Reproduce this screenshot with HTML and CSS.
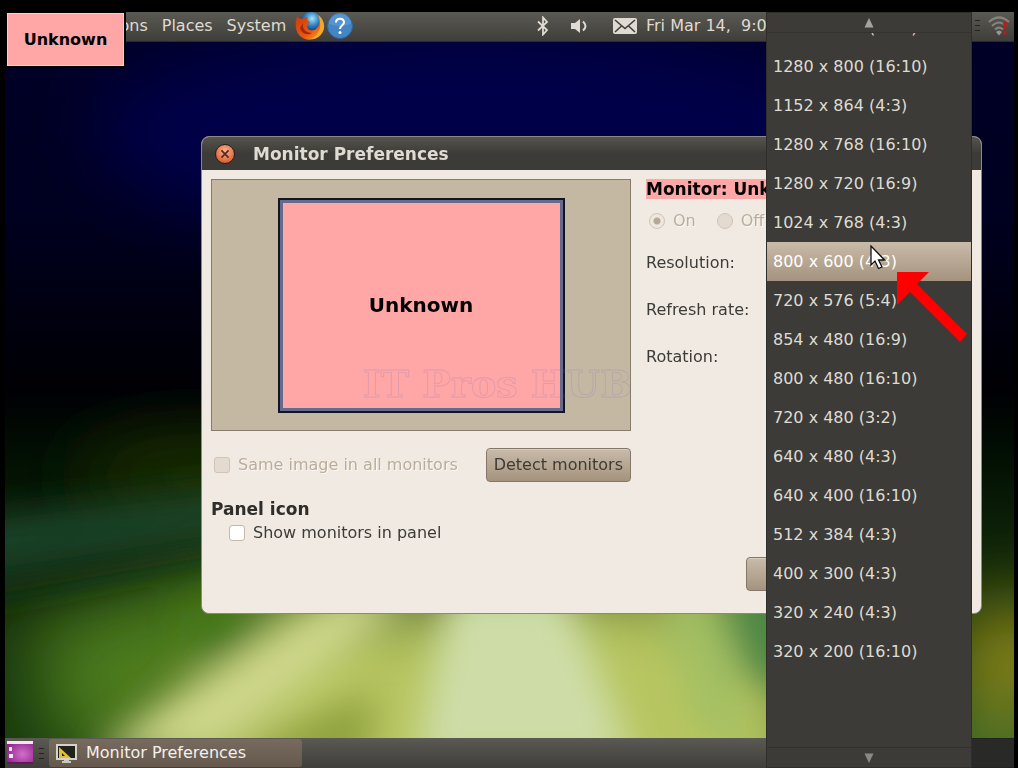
FILE: index.html
```
<!DOCTYPE html>
<html lang="en">
<head>
    <meta charset="UTF-8">
    <meta name="viewport" content="width=device-width, initial-scale=1.0">
    <title>Monitor Preferences</title>
    <link rel="stylesheet" href="styles.css">
</head>
<body>
<div class="screen">
    <!-- Top panel -->
    <header class="panel panel-top">
        <nav class="menus">
            <button type="button">Applications</button>
            <button type="button">Places</button>
            <button type="button">System</button>
        </nav>
        <svg class="launcher" viewBox="0 0 30 30" aria-hidden="true">
            <defs>
                <radialGradient id="globe" cx="55%" cy="30%" r="65%">
                    <stop offset="0" stop-color="#a5e4fa"/>
                    <stop offset=".5" stop-color="#2d82bf"/>
                    <stop offset="1" stop-color="#0b2468"/>
                </radialGradient>
                <linearGradient id="fox" x1="0" y1="0" x2="1" y2="1">
                    <stop offset="0" stop-color="#c93a0c"/>
                    <stop offset=".6" stop-color="#ea5a12"/>
                    <stop offset="1" stop-color="#f8b52a"/>
                </linearGradient>
            </defs>
            <circle cx="16" cy="12" r="11" fill="url(#globe)"/>
            <path d="M2 5 C3 7 5 8 7 8 C9 6 12 6 13 7 C11 9 13 10 15 11 C15 13 12 13 12 15 C12 19 17 21 21 18 C25 15 25 9 23 4 C29 8 31 16 27 22 C22 30 10 31 4 24 C0 19 0 11 2 5Z" fill="url(#fox)"/>
            <path d="M23 4 C29 8 31 16 27 22 C24 27 19 28 16 28 C22 25 26 19 25 12 C25 9 24 6 23 4Z" fill="#f3a82c"/>
            <path d="M8 12 C7 18 11 22 17 22 C12 25 6 22 5 17Z" fill="#a52a0a"/>
        </svg>
        <svg class="launcher" viewBox="0 0 30 30" aria-hidden="true">
            <circle cx="15" cy="15" r="12.5" fill="#4585c4" stroke="#2d66a4"/>
            <path d="M4 13 A11 11 0 0 1 26 13 Q15 17 4 13Z" fill="#6ba3d6" opacity=".5"/>
            <path d="M11 11.5 C11 6.5 19 6.5 19 11.5 C19 14 15 14.5 15 18" fill="none" stroke="#fff" stroke-width="2"/>
            <circle cx="15" cy="21.5" r="1.5" fill="#fff"/>
        </svg>
        <div class="tray">
            <svg class="bluetooth" viewBox="0 0 12 20" aria-label="Bluetooth">
                <path d="M1 5.5 L10 14 L6 18.5 V1.5 L10 6 L1 14.5" fill="none" stroke="#dfdbd2" stroke-width="1.8"/>
            </svg>
            <svg class="volume" viewBox="0 0 17 16" aria-label="Volume">
                <path d="M0 5 H4 L9 1 V15 L4 11 H0Z" fill="#dfdbd2"/>
                <path d="M12 3.5 Q17 8 12 12.5" fill="none" stroke="#dfdbd2" stroke-width="2"/>
            </svg>
            <svg class="mail" viewBox="0 0 24 16" aria-label="Mail">
                <rect x="0" y="0" width="24" height="16" rx="2" fill="#dfdbd2"/>
                <path d="M2 2 L12 10.5 L22 2 M2 14 L9 7.5 M22 14 L15 7.5" fill="none" stroke="#3c3b37" stroke-width="1.5"/>
            </svg>
            <time>Fri Mar 14, &nbsp;9:04 AM</time>
        </div>
        <i class="grip"></i>
        <svg class="wifi" viewBox="0 0 22 20" aria-label="Wireless">
            <g fill="none" stroke="#85827b" stroke-width="2.2">
                <path d="M1 6 Q11 -3 21 6"/>
                <path d="M4 10 Q11 3 18 10"/>
                <path d="M7 13.5 Q11 9.5 15 13.5"/>
            </g>
            <path d="M8 16 Q11 13 14 16 L11 19.5Z" fill="#9b978f"/>
            <path d="M15 6 H19 L18 14 H16Z M16 16 H18.5 V18.5 H16Z" fill="#b81d18"/>
        </svg>
    </header>

    <!-- Desktop with the preferences window -->
    <main class="desktop">
        <svg class="wallpaper" viewBox="0 0 1009 697" preserveAspectRatio="none" aria-hidden="true">
            <defs>
                <filter id="soft" x="-50%" y="-50%" width="200%" height="200%"><feGaussianBlur stdDeviation="36"/></filter>
                <filter id="fine" x="-50%" y="-50%" width="200%" height="200%"><feGaussianBlur stdDeviation="18"/></filter>
                <linearGradient id="sky" x1="0" y1="0" x2="0" y2="1">
                    <stop offset="0" stop-color="#000028"/>
                    <stop offset=".25" stop-color="#000020"/>
                    <stop offset=".5" stop-color="#000004"/>
                    <stop offset=".6" stop-color="#021003"/>
                    <stop offset=".8" stop-color="#16300c"/>
                    <stop offset="1" stop-color="#163a0e"/>
                </linearGradient>
            </defs>
            <rect width="1009" height="697" fill="url(#sky)"/>
            <g filter="url(#soft)">
                <ellipse cx="470" cy="90" rx="380" ry="110" fill="#00004a"/>
                <ellipse cx="200" cy="435" rx="130" ry="34" fill="#203400"/>
                <path d="M20 590 L230 520 L420 580 L150 700 L60 720Z" fill="#4c7a1c"/>
                <path d="M130 740 L290 570 L620 540 L780 570 L820 780 L130 800Z" fill="#b8c660"/>
                <ellipse cx="1010" cy="615" rx="70" ry="50" fill="#8a8514"/>
                <ellipse cx="990" cy="710" rx="60" ry="50" fill="#547a2c"/>
            </g>
            <g filter="url(#fine)">
                <path d="M-40 482 L230 450 L230 485 L-40 528Z" fill="#1c4a30" opacity=".9"/>
                <path d="M-40 540 L230 490 L230 508 L-40 562Z" fill="#092417" opacity=".8"/>
                <path d="M180 570 L290 565 L195 625Z" fill="#3f7414"/>
                <path d="M90 712 L330 555 L410 555 L210 712Z" fill="#cfd78c"/>
                <path d="M210 722 L370 650 L360 722Z" fill="#8c9e3c"/>
                <path d="M410 722 L445 550 L560 550 L630 722Z" fill="#cedda8"/>
                <path d="M650 550 L730 550 L740 720 L690 680Z" fill="#a3bf64"/>
                <path d="M705 550 L800 550 L800 650 L745 640Z" fill="#4d8745"/>
            </g>
        </svg>
        <section class="window">
            <div class="titlebar">
                <button type="button" class="close" aria-label="Close window">
                    <svg viewBox="0 0 20 20"><path d="M6 6 L14 14 M14 6 L6 14" stroke="#5a2a18" stroke-width="2"/></svg>
                </button>
                <h1>Monitor Preferences</h1>
            </div>
            <form class="content">
                <div class="left">
                    <div class="preview"><div class="monitor">Unknown</div></div>
                    <div class="row">
                        <label class="check off"><input type="checkbox" disabled>Same image in all monitors</label>
                        <button type="button" class="btn">Detect monitors</button>
                    </div>
                    <h2>Panel icon</h2>
                    <label class="check indent"><input type="checkbox">Show monitors in panel</label>
                </div>
                <div class="right">
                    <h2 class="name">Monitor: Unknown</h2>
                    <div class="radios">
                        <label class="check off"><input type="radio" name="power" checked disabled>On</label>
                        <label class="check off"><input type="radio" name="power" disabled>Off</label>
                    </div>
                    <div class="field">
                        <label for="resolution">Resolution:</label>
                        <select id="resolution"></select>
                    </div>
                    <div class="field">
                        <label for="refresh">Refresh rate:</label>
                        <select id="refresh"></select>
                    </div>
                    <div class="field">
                        <label for="rotation">Rotation:</label>
                        <select id="rotation"></select>
                    </div>
                    <div class="actions">
                        <button type="button" class="btn" aria-label="Apply"></button>
                        <button type="button" class="btn" aria-label="Close"></button>
                    </div>
                </div>
            </form>
        </section>
    </main>

    <!-- Bottom panel -->
    <footer class="panel panel-bottom">
        <svg class="show-desktop" viewBox="0 0 28 26" aria-label="Show desktop">
            <defs>
                <radialGradient id="purple" cx="60%" cy="55%" r="65%">
                    <stop offset="0" stop-color="#d070c8"/>
                    <stop offset="1" stop-color="#93248f"/>
                </radialGradient>
            </defs>
            <rect x="1" y="2" width="26" height="22" fill="url(#purple)"/>
            <path d="M1 1 H27 V4 H1Z M3 7 H6 V11 H3Z M3 14 H7 V18 H3Z" fill="#f0e8ee"/>
            <path d="M1 22 H27 V24 H1Z" fill="#641860"/>
        </svg>
        <i class="grip"></i>
        <button type="button" class="task">
            <svg viewBox="0 0 21 19" aria-hidden="true">
                <rect x="1" y="1" width="19" height="14" fill="#22221c" stroke="#d3d3c8" stroke-width="2"/>
                <path d="M3 3 L15 14 H3Z M6 9 V12 H9Z" fill="#e0c23a" fill-rule="evenodd"/>
                <path d="M8 16 H13 V17 H15 V19 H6 V17 H8Z" fill="#c8c8c0"/>
            </svg>
            Monitor Preferences
        </button>
        <div class="workspaces"></div>
    </footer>
</div>

<div class="monitor-tag">Unknown</div>
<div class="watermark">IT Pros HUB</div>

<!-- Open resolution list -->
<div class="popup">
    <button type="button" class="scroll up" aria-label="Scroll up">
        <svg viewBox="0 0 10 10"><path d="M5 0 L9.5 9.5 H0.5Z" fill="#a5a39c"/></svg>
    </button>
    <ul role="listbox" aria-label="Resolution">
        <li role="option">1360 x 768 (16:9)</li>
        <li role="option">1280 x 800 (16:10)</li>
        <li role="option">1152 x 864 (4:3)</li>
        <li role="option">1280 x 768 (16:10)</li>
        <li role="option">1280 x 720 (16:9)</li>
        <li role="option">1024 x 768 (4:3)</li>
        <li role="option" class="active" aria-selected="true">800 x 600 (4:3)</li>
        <li role="option">720 x 576 (5:4)</li>
        <li role="option">854 x 480 (16:9)</li>
        <li role="option">800 x 480 (16:10)</li>
        <li role="option">720 x 480 (3:2)</li>
        <li role="option">640 x 480 (4:3)</li>
        <li role="option">640 x 400 (16:10)</li>
        <li role="option">512 x 384 (4:3)</li>
        <li role="option">400 x 300 (4:3)</li>
        <li role="option">320 x 240 (4:3)</li>
        <li role="option">320 x 200 (16:10)</li>
    </ul>
    <button type="button" class="scroll down" aria-label="Scroll down">
        <svg viewBox="0 0 10 10"><path d="M5 10 L9.5 0.5 H0.5Z" fill="#8b8983"/></svg>
    </button>
</div>

<svg class="cursor" viewBox="0 0 16 25" aria-hidden="true">
    <path d="M1 1 V20 L5 16 L8.5 23.5 L12 22 L8.5 15 H14.5Z" fill="#fff" stroke="#111" stroke-width="1.3"/>
</svg>
<svg class="arrow" viewBox="0 0 70 70" aria-hidden="true">
    <path d="M0 0 H32 L20 12 L70 62 L63 70 L13 20 L0 33Z" fill="#fe0000"/>
</svg>
</body>
</html>
```
FILE: styles.css
```
/* -------- Base -------- */
:root {
    --dark: #3c3b37;
    --light: #dfdbd2;
    --base: #f1eae3;
    --pink: #ffa6a6;
    --brown: linear-gradient(#c9bbaa, #a4937d);
}
* { box-sizing: border-box; }
body {
    margin: 0;
    min-height: 100vh;
    background: #000;
    color: var(--dark);
    font: 16px/20px "DejaVu Sans", sans-serif;
    position: relative;
    overflow: hidden;
}
button, select { font: inherit; color: inherit; }
button { padding: 0; border: 0; background: none; }
h1, h2 { margin: 0; font-size: 17px; line-height: 20px; }
svg { display: block; flex: none; }
.screen {
    min-height: 100vh;
    padding: 12px 4px 0 5px;
    display: flex;
    flex-direction: column;
}

/* -------- Panels -------- */
.panel {
    display: flex;
    align-items: center;
    color: var(--light);
    background: linear-gradient(#5a5953, #3f3e3a);
    height: 30px;
}
.panel-top { padding-bottom: 2px; border-bottom: 1px solid #2b2a28; }
.menus { display: flex; gap: 14px; padding-left: 45px; }
.menus button { white-space: nowrap; }
.launcher { width: 30px; height: 30px; }
.menus + .launcher { margin-left: 9px; }
.tray { display: flex; align-items: center; margin-left: auto; width: 436px; white-space: nowrap; }
.bluetooth { width: 12px; height: 20px; }
.volume { width: 17px; height: 16px; margin-left: 22px; }
.mail { width: 24px; height: 16px; margin: 0 9px 0 25px; }
.grip {
    width: 5px;
    height: 11px;
    margin: 0 8px 0 2px;
    background: repeating-linear-gradient(#24231f 0 1px, transparent 1px 5px);
}
.wifi { width: 22px; height: 20px; margin-right: 4px; }
.show-desktop { width: 28px; height: 26px; margin: 0 3px 0 1px; }
.panel-bottom .grip { margin-right: 5px; }
.task {
    display: flex;
    align-items: center;
    gap: 9px;
    width: 253px;
    height: 28px;
    padding: 0 7px;
    color: #f4f0ea;
    background: linear-gradient(#776b5f, #65594e);
    border-radius: 3px;
}
.task svg { width: 21px; height: 19px; }
.workspaces {
    margin-left: auto;
    width: 42px;
    height: 30px;
    background: #292927;
    border: solid #222;
    border-width: 1px 0;
}

/* -------- Desktop -------- */
.desktop { flex: 1; position: relative; overflow: hidden; }
.wallpaper { position: absolute; inset: 0; width: 100%; height: 100%; }

/* -------- Window -------- */
.window {
    position: absolute;
    left: 196px;
    right: 32px;
    top: 94px;
    height: 478px;
    display: flex;
    flex-direction: column;
    background: var(--base);
    border: 1px solid #8a8983;
    border-radius: 8px;
    overflow: hidden;
}
.titlebar {
    display: flex;
    align-items: center;
    gap: 18px;
    height: 33px;
    flex: none;
    padding-left: 13px;
    color: var(--light);
    background: linear-gradient(#55544e, #3c3b37 50%);
}
.close {
    width: 20px;
    height: 20px;
    border: 1px solid #2a1e18;
    border-radius: 50%;
    background: radial-gradient(circle at 50% 35%, #f9b494, #dc6237 75%);
}
.content { flex: 1; display: flex; gap: 15px; padding: 9px 18px 9px 9px; }
.left { width: 420px; flex: none; }
.preview {
    display: grid;
    place-items: center;
    height: 252px;
    background: #c5b8a3;
    border: 1px solid #877b6c;
}
.monitor {
    display: grid;
    place-items: center;
    width: 287px;
    height: 215px;
    color: #000;
    background: var(--pink);
    border: 2px solid #111625;
    box-shadow: inset 0 0 0 3px #666b8d;
    font-size: 20px;
    font-weight: bold;
}
.row { display: flex; align-items: center; justify-content: space-between; margin: 17px 0; }
.row + h2 { color: #2e2d2a; }
.btn {
    height: 34px;
    padding: 0 7px;
    background: var(--brown);
    border: 1px solid #84776a;
    border-radius: 4px;
    box-shadow: inset 0 1px #d8cdbf;
}
.check { display: flex; align-items: center; gap: 8px; }
.off { color: #b9ad9b; text-shadow: 1px 1px #fbf7f2; }
.indent { margin: 4px 0 0 18px; }
.check input {
    appearance: none;
    width: 16px;
    height: 16px;
    margin: 0;
    margin-left: 3px;
    border: 1px solid #c4b9aa;
    border-radius: 3px;
    background: #fff;
}
.indent input { margin-left: 0; }
.check input:disabled { background: #e4dbd0; border-color: #cfc4b6; }
.check input[type="radio"] { border-radius: 50%; }
.check input[type="radio"]:checked { background: radial-gradient(circle, #b4a896 3px, #eee7df 4px); }
.right { flex: 1; display: flex; flex-direction: column; }
.name { color: #000; background: var(--pink); }
.radios { display: flex; gap: 18px; margin: 12px 0 8px; }
.field { display: flex; align-items: center; gap: 16px; height: 47px; }
.field label { width: 110px; white-space: nowrap; }
.field select { flex: 1; height: 34px; background: var(--brown); border: 1px solid #84776a; border-radius: 4px; }
.actions { display: flex; gap: 10px; margin: auto 0 13px 100px; }
.actions .btn { flex: 1; }

/* -------- Overlays -------- */
.monitor-tag {
    position: absolute;
    left: 7px;
    top: 13px;
    display: grid;
    place-items: center;
    width: 117px;
    height: 53px;
    color: #000;
    background: var(--pink);
    border: 1px solid #fbd0c8;
    box-shadow: 0 0 0 2px #000;
    font-weight: bold;
}
.popup {
    position: absolute;
    top: 12px;
    bottom: 0;
    right: 46px;
    width: 206px;
    display: flex;
    flex-direction: column;
    color: var(--light);
    background: var(--dark);
    border: 1px solid #2f2e2b;
}
.popup ul { flex: 1; margin: 0; padding: 0; list-style: none; overflow: hidden; }
.popup li { height: 39px; padding: 0 6px; line-height: 39px; }
.popup li:first-child { margin-top: -25px; }
.popup .active { color: #fff; background: var(--brown); }
.scroll { display: grid; place-items: center; height: 20px; }
.scroll svg { width: 10px; height: 10px; }
.up { border-bottom: 1px solid #33322f; }
.down { border-top: 1px solid #33322f; }
.cursor { position: absolute; left: 870px; top: 245px; width: 16px; height: 25px; }
.arrow { position: absolute; left: 897px; top: 272px; width: 70px; height: 70px; }
.watermark {
    position: absolute;
    left: 363px;
    top: 368px;
    color: transparent;
    -webkit-text-stroke: 1px #7c6cb0;
    opacity: .2;
    font: bold 38px/32px "DejaVu Serif", serif;
    white-space: nowrap;
}
```
